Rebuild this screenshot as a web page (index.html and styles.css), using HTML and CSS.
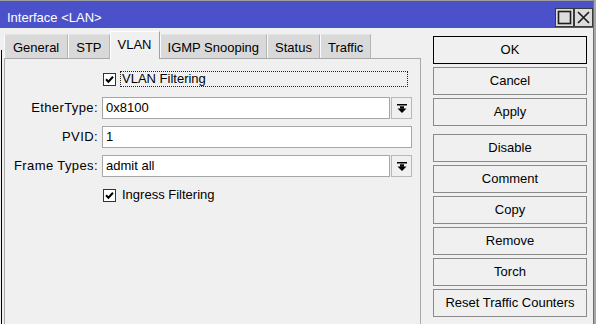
FILE: index.html
```html
<!DOCTYPE html>
<html>
<head>
<meta charset="utf-8">
<link rel="stylesheet" href="styles.css">
</head>
<body>
<div class="window">
  <div class="titlebar">
    <span class="title">Interface &lt;LAN&gt;</span>
    <div class="tb-buttons">
      <span class="tb-btn">
        <svg width="19" height="19" viewBox="0 0 19 19"><rect x="0.5" y="0.5" width="18" height="18" fill="#dcdcdc" stroke="#3a3a3a"/><rect x="3.5" y="3.5" width="12" height="12" fill="none" stroke="#1e1e1e" stroke-width="1.6"/></svg>
      </span>
      <span class="tb-btn">
        <svg width="19" height="19" viewBox="0 0 19 19"><rect x="0.5" y="0.5" width="18" height="18" fill="#dcdcdc" stroke="#3a3a3a"/><path d="M4 4 L15 15 M15 4 L4 15" stroke="#1e1e1e" stroke-width="1.7"/></svg>
      </span>
    </div>
  </div>
  <div class="body">
    <div class="edge"><div class="edge-line"></div></div>
    <div class="tabs-area">
      <div class="tabs">
        <span class="tab tab-first">General</span>
        <span class="tab">STP</span>
        <span class="tab tab-active">VLAN</span>
        <span class="tab">IGMP Snooping</span>
        <span class="tab">Status</span>
        <span class="tab">Traffic</span>
      </div>
      <div class="panel">
        <div class="row row-check">
          <span class="label"></span>
          <div class="field">
            <span class="checkbox"><svg width="13" height="13" viewBox="0 0 13 13"><rect x="0.5" y="0.5" width="12" height="12" fill="#fff" stroke="#333"/><path d="M3 6.3 L5.4 8.8 L10 3.8" fill="none" stroke="#000" stroke-width="2"/></svg></span>
            <span class="check-label focused">VLAN Filtering</span>
          </div>
        </div>
        <div class="row row-ether">
          <span class="label">EtherType:</span>
          <div class="field">
            <span class="input">0x8100</span>
            <span class="dd"><svg width="10" height="9" viewBox="0 0 10 9"><rect x="0" y="0" width="10" height="1.5" fill="#000"/><rect x="3" y="2.3" width="4" height="2.4" fill="#000"/><polygon points="0.5,4.5 9.5,4.5 5,9" fill="#000"/></svg></span>
          </div>
        </div>
        <div class="row">
          <span class="label">PVID:</span>
          <div class="field">
            <span class="input">1</span>
          </div>
        </div>
        <div class="row">
          <span class="label">Frame Types:</span>
          <div class="field">
            <span class="input">admit all</span>
            <span class="dd"><svg width="10" height="9" viewBox="0 0 10 9"><rect x="0" y="0" width="10" height="1.5" fill="#000"/><rect x="3" y="2.3" width="4" height="2.4" fill="#000"/><polygon points="0.5,4.5 9.5,4.5 5,9" fill="#000"/></svg></span>
          </div>
        </div>
        <div class="row row-check row-ingress">
          <span class="label"></span>
          <div class="field">
            <span class="checkbox"><svg width="13" height="13" viewBox="0 0 13 13"><rect x="0.5" y="0.5" width="12" height="12" fill="#fff" stroke="#333"/><path d="M3 6.3 L5.4 8.8 L10 3.8" fill="none" stroke="#000" stroke-width="2"/></svg></span>
            <span class="check-label">Ingress Filtering</span>
          </div>
        </div>
      </div>
    </div>
    <div class="buttons">
      <span class="btn btn-default">OK</span>
      <span class="btn">Cancel</span>
      <span class="btn">Apply</span>
      <span class="btn btn-sep">Disable</span>
      <span class="btn">Comment</span>
      <span class="btn">Copy</span>
      <span class="btn">Remove</span>
      <span class="btn">Torch</span>
      <span class="btn">Reset Traffic Counters</span>
    </div>
  </div>
</div>
</body>
</html>
```

FILE: styles.css
```css
* { box-sizing: border-box; }
html, body { margin: 0; padding: 0; }
body {
  background: #a7a7a7;
  font-family: "Liberation Sans", Arial, sans-serif;
  font-size: 13px;
  color: #000;
  width: 596px;
  height: 324px;
  overflow: hidden;
}
.window {
  width: 594px;
  height: 324px;
  border-top: 1px solid #9d9d9d;
  border-right: 1px solid #6f6f6f;
  background: #f0f0f0;
  display: flex;
  flex-direction: column;
}
.titlebar {
  height: 27px;
  flex: none;
  background: #4b51c9;
  display: flex;
  align-items: flex-end;
  justify-content: space-between;
  padding-left: 7px;
}
.title {
  color: #fff;
  line-height: 15px;
  margin-bottom: 3px;
  white-space: nowrap;
}
.tb-buttons {
  display: flex;
  margin-bottom: 1px;
}
.tb-btn { display: block; width: 19px; height: 19px; }
.tb-btn svg { display: block; }

.body {
  flex: 1;
  display: flex;
  min-height: 0;
}
.edge {
  width: 4px;
  flex: none;
  padding-top: 22px;
  display: flex;
}
.edge-line {
  margin-left: 1px;
  width: 1px;
  background: #000;
}
.tabs-area {
  width: 417px;
  flex: none;
  display: flex;
  flex-direction: column;
  padding-top: 3px;
}
.tabs {
  display: flex;
  align-items: flex-end;
  height: 27px;
  flex: none;
}
.tab {
  height: 24px;
  padding: 4px 7px 0;
  line-height: 18px;
  background: #d9d9d9;
  border-top: 1px solid #e4e4e4;
  border-left: 1px solid #fbfbfb;
  border-right: 1px solid #b4b4b4;
  white-space: nowrap;
}
.tab-first { padding: 4px 8px 0; }
.tab-active {
  position: relative;
  z-index: 1;
  height: 28px;
  margin-bottom: -1px;
  background: #f0f0f0;
  border-top: 1px solid #fff;
  border-left: 1px solid #fff;
  border-right: 1px solid #a0a0a0;
}
.panel {
  flex: 1;
  border: 1px solid #a9a9a9;
  border-bottom: none;
  background: #f0f0f0;
  padding: 12px 8px 0 0;
  display: flex;
  flex-direction: column;
}
.row {
  display: flex;
  gap: 4px;
  height: 22px;
  margin-top: 7px;
  flex: none;
}
.row .label {
  width: 93px;
  flex: none;
  text-align: right;
  line-height: 22px;
  letter-spacing: 0.4px;
  white-space: nowrap;
}
.field {
  width: 310px;
  display: flex;
  gap: 1px;
}
.input {
  flex: 1;
  background: #fff;
  border: 1px solid #a6a6a6;
  padding-left: 3px;
  line-height: 20px;
  white-space: nowrap;
}
.dd {
  width: 21px;
  flex: none;
  border: 1px solid #b8b8b8;
  background: #f0f0f0;
  display: flex;
  align-items: center;
  justify-content: center;
}
.dd svg { display: block; }
.row-check {
  height: 16px;
  margin-top: 0;
}
.row-ether { margin-top: 10px; }
.row-ingress { margin-top: 10px; }
.row-check .field { gap: 4px; }
.checkbox {
  display: block;
  width: 13px;
  height: 13px;
  margin: 2px 0 0 1px;
}
.checkbox svg { display: block; }
.check-label {
  flex: 1;
  margin-right: 4px;
  border: 1px dotted transparent;
  padding-left: 1px;
  line-height: 14px;
  white-space: nowrap;
}
.check-label.focused { border-color: #222; }

.buttons {
  width: 154px;
  flex: none;
  margin-left: 12px;
  padding-top: 8px;
  display: flex;
  flex-direction: column;
  gap: 3px;
}
.btn {
  display: block;
  height: 28px;
  border: 1px solid #8a8a8a;
  background: #f0f0f0;
  text-align: center;
  line-height: 26px;
  white-space: nowrap;
}
.btn-default {
  border-color: #000;
}
.btn-sep { margin-top: 5px; }
```
